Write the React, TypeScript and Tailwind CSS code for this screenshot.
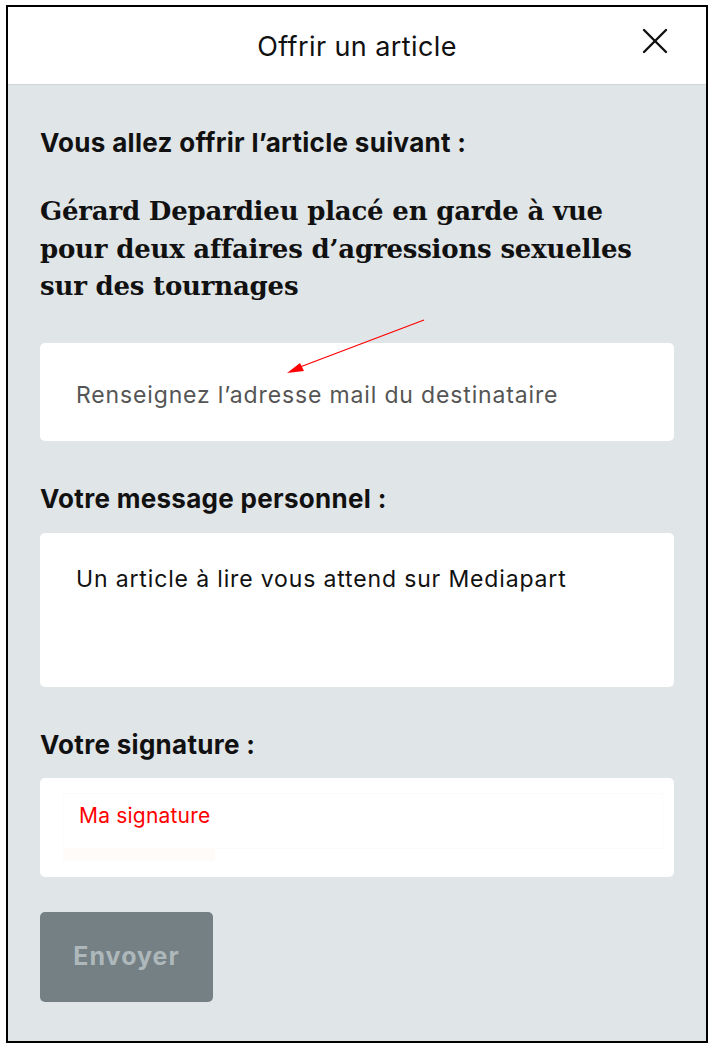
import React from "react";

const sans = "font-['Inter','Liberation_Sans',sans-serif]";

const CloseIcon = () => (
  <svg width="28" height="28" viewBox="0 0 28 28" fill="none" stroke="#111" strokeWidth="2.4" strokeLinecap="round">
    <line x1="3" y1="3" x2="25" y2="25" />
    <line x1="25" y1="3" x2="3" y2="25" />
  </svg>
);

export default function App() {
  return (
    <div className="w-[718px] h-[1052px] bg-white pt-[5px] pl-[6px]">
      <div className={`relative w-[702px] h-[1038px] border-2 border-black flex flex-col bg-[#e0e5e7] ${sans}`}>
        {/* header */}
        <div className="h-[78px] shrink-0 bg-white border-b border-[#cfd4d6] grid grid-cols-[1fr_auto_1fr] items-center">
          <div />
          <h1 className="text-[27px] leading-none text-[#111] tracking-[0.4px] mt-[2px]">Offrir un article</h1>
          <div className="flex justify-end pr-[37px] mt-[-10px]">
            <button aria-label="Fermer">
              <CloseIcon />
            </button>
          </div>
        </div>

        {/* body */}
        <div className="flex flex-col px-[32px] pt-[43px]">
          <p className="text-[26px] leading-[30px] font-bold text-[#111] tracking-[0.3px]">
            Vous allez offrir l’article suivant :
          </p>
          <h2 className="mt-[35px] font-['DejaVu_Serif','Liberation_Serif',serif] font-bold text-[26px] leading-[37.5px] text-[#111] tracking-[-0.2px]">
            Gérard Depardieu placé en garde à vue
            <br />
            pour deux affaires d’agressions sexuelles
            <br />
            sur des tournages
          </h2>

          <div className="mt-[37px] h-[98px] bg-white rounded-[5px] flex items-center pl-[36px] pt-[8px]">
            <input
              type="email"
              placeholder="Renseignez l’adresse mail du destinataire"
              className="w-full bg-transparent outline-none text-[23px] tracking-[0.85px] text-[#111] placeholder:text-[#555]"
            />
          </div>

          <p className="mt-[43px] text-[26px] leading-[30px] font-bold text-[#111] tracking-[0.3px]">
            Votre message personnel :
          </p>
          <textarea
            defaultValue="Un article à lire vous attend sur Mediapart"
            className="mt-[19px] h-[154px] bg-white rounded-[5px] resize-none outline-none px-[36px] pt-[31px] text-[23px] leading-[30px] tracking-[0.85px] text-[#111]"
          />

          <p className="mt-[43px] text-[26px] leading-[30px] font-bold text-[#111] tracking-[0.3px]">
            Votre signature :
          </p>
          <div className="mt-[18px] h-[99px] bg-white rounded-[5px] pl-[23px] pt-[15px]">
            <div className="w-[600px] h-[56px] border border-[#fbfbfb] pl-[15px] pt-[8px]">
              <span className="block text-[21px] leading-[28px] text-[#f00] tracking-[0.2px]">Ma signature</span>
            </div>
            <div className="w-[152px] h-[12px] bg-[#fffbf8]" />
          </div>

          <button className="mt-[35px] w-[173px] h-[90px] rounded-[5px] bg-[#748084] text-[#aeb8bb] text-[25px] font-bold tracking-[1px]">
            Envoyer
          </button>
        </div>

        {/* red annotation arrow */}
        <svg className="absolute left-0 top-0 pointer-events-none" width="702" height="400" viewBox="0 0 702 400">
          <line x1="416" y1="313" x2="292" y2="360" stroke="#f00" strokeWidth="1.3" />
          <polygon points="279,366 292,356 296,364" fill="#f00" />
        </svg>
      </div>
    </div>
  );
}
